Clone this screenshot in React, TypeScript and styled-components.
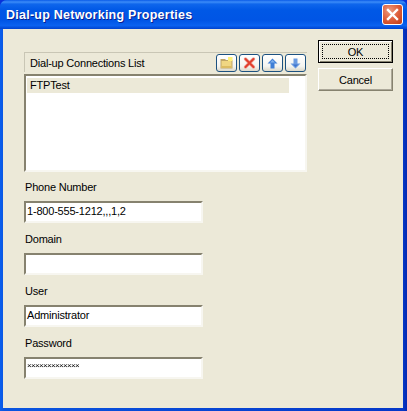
import React from "react";
import styled, { createGlobalStyle } from "styled-components";

const Global = createGlobalStyle`
  html, body { margin: 0; padding: 0; background: #0831d9; }
  #root { width: 407px; height: 411px; overflow: hidden; }
`;

const Frame = styled.div`
  width: 407px;
  height: 411px;
  box-sizing: border-box;
  display: flex;
  flex-direction: column;
  background: linear-gradient(90deg, #0a5fee 0%, #0a55e0 1%, #0538c8 99%, #0428b0 100%);
  border-radius: 7px 7px 0 0;
  font-family: "Liberation Sans", Arial, sans-serif;
  font-size: 11px;
  letter-spacing: -0.2px;
  color: #000;
`;

const TitleBar = styled.div`
  height: 29px;
  flex: none;
  display: flex;
  align-items: center;
  justify-content: space-between;
  padding: 0 4px 0 6px;
  box-sizing: border-box;
  border-radius: 7px 7px 0 0;
  background: linear-gradient(180deg, #0a5be8 0%, #3c8cf8 7%, #0f66ec 14%, #0058e6 35%, #0055e5 70%, #0a62f0 88%, #0043cf 100%);
`;

const Title = styled.span`
  font-weight: 700;
  font-size: 12.5px;
  letter-spacing: 0.25px;
  color: #fff;
  text-shadow: 1px 1px 0 #0a1f8f;
  padding-top: 1px;
`;

const CloseButton = styled.div`
  width: 21px;
  height: 21px;
  box-sizing: border-box;
  display: flex;
  align-items: center;
  justify-content: center;
  border: 1px solid #fff;
  border-radius: 3px;
  background: radial-gradient(circle at 35% 30%, #eb9a7f 0%, #de5f3c 50%, #c13a14 100%);
`;

const Client = styled.div`
  flex: 1;
  margin: 0 4px 3px 3px;
  background: #ece9d8;
  display: flex;
  align-items: flex-start;
  gap: 11px;
  padding: 11px 0 0 21px;
  box-sizing: border-box;
`;

const LeftColumn = styled.div`
  width: 283px;
  padding-top: 12px;
  display: flex;
  flex-direction: column;
`;

const ListHeader = styled.div`
  height: 20px;
  box-sizing: border-box;
  display: flex;
  align-items: center;
  justify-content: space-between;
  padding: 0 0 0 5px;
  border-top: 1px solid #c9c6b5;
  border-left: 1px solid #c9c6b5;
`;

const ToolRow = styled.div`
  display: flex;
  gap: 2px;
  padding-top: 1px;
  margin-right: 1px;
`;

const ToolButton = styled.div`
  width: 21px;
  height: 18px;
  box-sizing: border-box;
  display: flex;
  align-items: center;
  justify-content: center;
  border: 1px solid #1c5180;
  border-radius: 3px;
  background: linear-gradient(180deg, #ffffff 0%, #f4f4f0 70%, #dcd8c8 100%);
`;

const ListBox = styled.div`
  height: 98px;
  margin-top: 2px;
  box-sizing: border-box;
  background: #fff;
  border-top: 2px solid #86826f;
  border-left: 2px solid #86826f;
  border-right: 2px solid #f7f6f0;
  border-bottom: 2px solid #f7f6f0;
  padding: 2px 16px 0 1px;
`;

const ListItem = styled.div`
  height: 15px;
  line-height: 15px;
  background: #ece9d8;
  padding-left: 3px;
`;

const FieldLabel = styled.label<{ $first?: boolean }>`
  display: block;
  height: 14px;
  line-height: 14px;
  margin-top: ${(p) => (p.$first ? "8px" : "9px")};
  padding-left: 1px;
`;

const TextField = styled.div`
  width: 179px;
  height: 22px;
  margin-top: 7px;
  box-sizing: border-box;
  background: #fff;
  border-top: 2px solid #86826f;
  border-left: 2px solid #86826f;
  border-right: 2px solid #f7f6f0;
  border-bottom: 2px solid #f7f6f0;
  padding: 1px 0 0 1px;
  line-height: 15px;
  white-space: nowrap;
`;

const RightColumn = styled.div`
  width: 75px;
  display: flex;
  flex-direction: column;
  gap: 5px;
`;

const DefaultButton = styled.div`
  height: 23px;
  box-sizing: border-box;
  border: 1px solid #000;
  box-shadow: inset 1px 1px 0 #fff, inset -1px -1px 0 #86826f;
  padding: 3px;
  display: flex;
`;

const FocusRing = styled.div`
  flex: 1;
  border: 1px dotted #000;
  display: flex;
  align-items: center;
  justify-content: center;
`;

const PushButton = styled.div`
  height: 23px;
  box-sizing: border-box;
  display: flex;
  align-items: center;
  justify-content: center;
  border-top: 1px solid #fff;
  border-left: 1px solid #fff;
  border-right: 1px solid #86826f;
  border-bottom: 1px solid #86826f;
  box-shadow: inset -1px -1px 0 #aca899;
`;

const PasswordText = styled.span`
  display: inline-block;
  font-size: 8px;
  letter-spacing: -0.67px;
  position: relative;
  top: -3px;
  filter: grayscale(1) contrast(1.3);
  color: #000;
`;

const fields = [
  { label: "Phone Number", value: "1-800-555-1212,,,1,2" },
  { label: "Domain", value: "" },
  { label: "User", value: "Administrator" },
  { label: "Password", value: "×××××××××××××" },
];

export default function App() {
  return (
    <>
      <Global />
      <Frame>
        <TitleBar>
          <Title>Dial-up Networking Properties</Title>
          <CloseButton>
            <svg width="13" height="13" viewBox="0 0 13 13">
              <path d="M2 2 L11 11 M11 2 L2 11" stroke="#fff" strokeWidth="2.4" strokeLinecap="square" />
            </svg>
          </CloseButton>
        </TitleBar>
        <Client>
          <LeftColumn>
            <ListHeader>
              <span>Dial-up Connections List</span>
              <ToolRow>
                <ToolButton>
                  <svg width="13" height="12" viewBox="0 0 13 12">
                    <path d="M0.5 2 H5 L6 3 H12.5 V11.5 H0.5 Z" fill="#bfa566" />
                    <rect x="1.5" y="4" width="10" height="7" fill="#f0d682" />
                    <rect x="1.5" y="9" width="10" height="2" fill="#dcbc62" />
                    <rect x="8" y="0" width="4.5" height="4" fill="#fff17a" />
                  </svg>
                </ToolButton>
                <ToolButton>
                  <svg width="13" height="12" viewBox="0 0 13 12">
                    <path d="M2.5 2 L10.5 10 M10.5 2 L2.5 10" stroke="#f2a79c" strokeWidth="3.2" strokeLinecap="round" />
                    <path d="M2.5 2 L10.5 10 M10.5 2 L2.5 10" stroke="#e0402f" strokeWidth="2" strokeLinecap="round" />
                  </svg>
                </ToolButton>
                <ToolButton>
                  <svg width="11" height="11" viewBox="0 0 11 11">
                    <path d="M5.5 0.5 L10.5 5.5 H7.5 V10.5 H3.5 V5.5 H0.5 Z" fill="#3f7ed6" />
                    <path d="M5.5 2 L8 4.5 H3 Z" fill="#7fb0ec" />
                  </svg>
                </ToolButton>
                <ToolButton>
                  <svg width="11" height="11" viewBox="0 0 11 11">
                    <path d="M5.5 10.5 L10.5 5.5 H7.5 V0.5 H3.5 V5.5 H0.5 Z" fill="#6a9ae0" />
                    <path d="M5.5 9 L8 6.5 H3 Z" fill="#3f74cc" />
                  </svg>
                </ToolButton>
              </ToolRow>
            </ListHeader>
            <ListBox>
              <ListItem>FTPTest</ListItem>
            </ListBox>
            {fields.map((f, i) => (
              <React.Fragment key={f.label}>
                <FieldLabel $first={i === 0}>{f.label}</FieldLabel>
                <TextField>
                  {f.label === "Password" ? <PasswordText>{f.value}</PasswordText> : f.value}
                </TextField>
              </React.Fragment>
            ))}
          </LeftColumn>
          <RightColumn>
            <DefaultButton>
              <FocusRing>OK</FocusRing>
            </DefaultButton>
            <PushButton>Cancel</PushButton>
          </RightColumn>
        </Client>
      </Frame>
    </>
  );
}
